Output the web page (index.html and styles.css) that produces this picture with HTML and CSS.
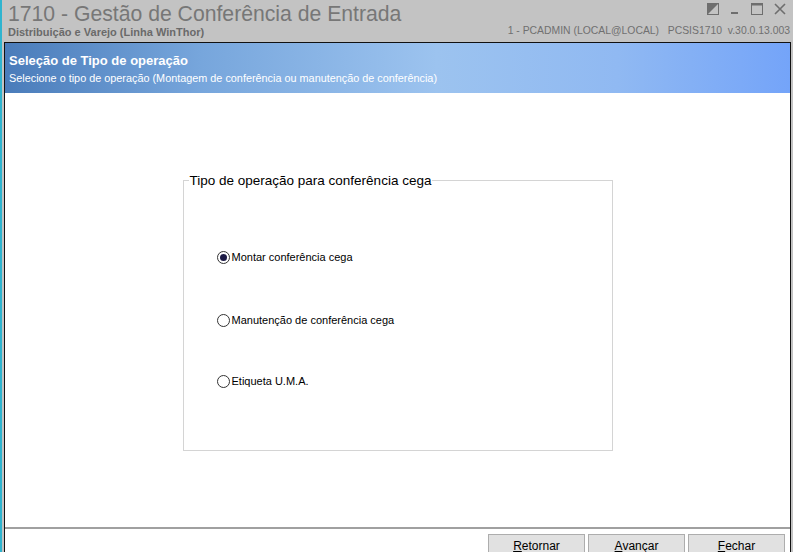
FILE: index.html
```html
<!DOCTYPE html>
<html lang="pt-BR">
<head>
<meta charset="utf-8">
<title>1710 - Gestão de Conferência de Entrada</title>
<link rel="stylesheet" href="styles.css">
</head>
<body>
<div class="janela">

<div class="topo">
    <div class="topo-esq">
        <div class="titulo">1710 - Gestão de Conferência de Entrada</div>
        <div class="sistema">Distribuição e Varejo (Linha WinThor)</div>
    </div>
    <div class="topo-dir">
        <div class="botoes-janela">
            <svg width="12" height="12" viewBox="0 0 12 12"><rect x="0.5" y="0.5" width="11" height="11" fill="none" stroke="#6e6e6e"/><polygon points="1,11 11,1 1,1" fill="#6e6e6e"/></svg>
            <svg width="10" height="12" viewBox="0 0 10 12"><rect x="1" y="9" width="7" height="2" fill="#6e6e6e"/></svg>
            <svg width="12" height="12" viewBox="0 0 12 12"><rect x="0.5" y="0.5" width="11" height="11" fill="none" stroke="#6e6e6e"/><rect x="0.5" y="0.5" width="11" height="2" fill="#6e6e6e"/></svg>
            <svg width="12" height="12" viewBox="0 0 12 12"><path d="M1 1 L11 11 M11 1 L1 11" stroke="#6e6e6e" stroke-width="1.6"/></svg>
        </div>
        <div class="info">1 - PCADMIN (LOCAL@LOCAL)&nbsp;&nbsp;&nbsp;PCSIS1710&nbsp;&nbsp;v.30.0.13.003</div>
    </div>
</div>

<div class="painel">
    <div class="cabecalho">
        <h1>Seleção de Tipo de operação</h1>
        <p>Selecione o tipo de operação (Montagem de conferência ou manutenção de conferência)</p>
    </div>

    <div class="conteudo">
        <fieldset class="grupo">
            <legend>Tipo de operação para conferência cega</legend>
            <label class="opcao"><span class="radio marcado"></span>Montar conferência cega</label>
            <label class="opcao"><span class="radio"></span>Manutenção de conferência cega</label>
            <label class="opcao"><span class="radio"></span>Etiqueta U.M.A.</label>
        </fieldset>
    </div>

    <div class="rodape">
        <button><u>R</u>etornar</button>
        <button><u>A</u>vançar</button>
        <button><u>F</u>echar</button>
    </div>
</div>

</div>
</body>
</html>
```

FILE: styles.css
```css
html, body {
    margin: 0;
    height: 100%;
    overflow: hidden;
}

body {
    font-family: "Liberation Sans", Arial, sans-serif;
    background-color: #c3c3c3;
}

.janela {
    height: 552px;
    border-left: 2px solid #2fb4cf;
    display: flex;
    flex-direction: column;
}

.topo {
    height: 42px;
    display: flex;
    justify-content: space-between;
    padding: 0 3px 0 6px;
    color: #777;
}

.titulo {
    font-size: 21.2px;
    line-height: 24px;
    margin-top: 2px;
}

.sistema {
    font-size: 11px;
    font-weight: bold;
    color: #6a6a6a;
    margin-top: 0;
}

.topo-dir {
    display: flex;
    flex-direction: column;
    align-items: flex-end;
}

.botoes-janela {
    display: flex;
    gap: 11px;
    margin-top: 3px;
    margin-right: 4px;
    height: 14px;
}

.info {
    font-size: 10.4px;
    margin-top: 8px;
    color: #707070;
}

.painel {
    flex: 1;
    margin-left: 2px;
    width: 785px;
    border: 1px solid #111;
    border-bottom: 0;
    display: flex;
    flex-direction: column;
    background-color: #fff;
}

.cabecalho {
    height: 50px;
    padding-left: 4px;
    color: #fff;
    background: linear-gradient(to right, #4a7cba 0%, #77a6dc 25%, #9cc3ef 55%, #90b9f2 78%, #74a4f9 100%);
}

.cabecalho h1 {
    font-size: 13px;
    margin: 10px 0 0 0;
    line-height: 16px;
}

.cabecalho p {
    font-size: 10.85px;
    margin: 3px 0 0 0;
}

.conteudo {
    flex: 1;
    display: flex;
    justify-content: center;
    padding-top: 80px;
}

.grupo {
    width: 430px;
    height: 278px;
    margin: 0;
    padding: 0;
    border: 1px solid #d4d4d4;
    box-sizing: border-box;
    display: flex;
    flex-direction: column;
}

.grupo legend {
    font-size: 13.5px;
    color: #000;
    margin-left: 5px;
    padding: 0 1px;
}

.opcao {
    display: flex;
    align-items: center;
    font-size: 11px;
    color: #000;
    margin-left: 33px;
    height: 14px;
    margin-top: 49px;
}

.opcao:nth-of-type(1) { margin-top: 62px; }
.opcao:nth-of-type(3) { margin-top: 47px; }

.radio {
    width: 11px;
    height: 11px;
    border: 1px solid #333;
    border-radius: 50%;
    margin-right: 2px;
    display: flex;
    align-items: center;
    justify-content: center;
}

.radio.marcado::after {
    content: "";
    width: 7px;
    height: 7px;
    border-radius: 50%;
    background-color: #1c1a45;
}

.rodape {
    height: 18px;
    flex: none;
    border-top: 2px solid #a0a0a0;
    display: flex;
    justify-content: flex-end;
    align-items: flex-start;
    gap: 3px;
    padding: 5px 5px 0 0;
}

.rodape button {
    flex: none;
    width: 97px;
    height: 22px;
    background-color: #e1e1e1;
    border: 1px solid #adadad;
    font-family: "Liberation Sans", Arial, sans-serif;
    font-size: 12px;
    color: #000;
    padding: 2px 0 0 0;
}
```
